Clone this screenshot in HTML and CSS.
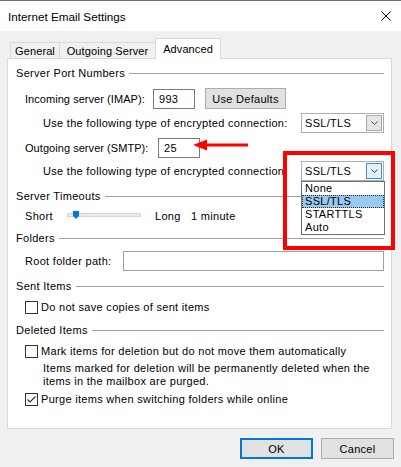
FILE: index.html
```html
<!DOCTYPE html>
<html>
<head>
<meta charset="utf-8">
<title>Internet Email Settings</title>
<link rel="stylesheet" href="styles.css">
</head>
<body>
<div class="window">
  <div class="titlebar">
    <span class="title">Internet Email Settings</span>
    <svg class="close" width="10" height="10" viewBox="0 0 10 10"><path d="M0.5 0.5L9.5 9.5M9.5 0.5L0.5 9.5" stroke="#000" stroke-width="1" fill="none"/></svg>
  </div>
  <div class="body">
    <div class="tabs">
      <div class="tab tab-general">General</div>
      <div class="tab tab-outgoing">Outgoing Server</div>
      <div class="tab tab-active">Advanced</div>
    </div>
    <div class="panel">
      <div class="group-head"><span>Server Port Numbers</span><i class="rule"></i></div>
      <div class="row row-imap">
        <span class="lbl-imap">Incoming server (IMAP):</span>
        <div class="textbox port">993</div>
        <div class="btn btn-defaults">Use Defaults</div>
      </div>
      <div class="row row-enc row-enc1">
        <span>Use the following type of encrypted connection:</span>
        <div class="select"><span>SSL/TLS</span><span class="drop"><svg width="7" height="4" viewBox="0 0 7 4"><path d="M0.5 0.5L3.5 3.5L6.5 0.5" stroke="#444" stroke-width="1" fill="none"/></svg></span></div>
      </div>
      <div class="row row-smtp">
        <span class="lbl-smtp">Outgoing server (SMTP):</span>
        <div class="textbox port port-smtp">25</div>
      </div>
      <div class="row row-enc row-enc2">
        <span>Use the following type of encrypted connection:</span>
        <div class="select"><span>SSL/TLS</span><span class="drop drop-focus"><svg width="7" height="4" viewBox="0 0 7 4"><path d="M0.5 0.5L3.5 3.5L6.5 0.5" stroke="#333" stroke-width="1" fill="none"/></svg></span>
          <div class="list">
            <div class="item">None</div>
            <div class="item item-sel">SSL/TLS</div>
            <div class="item">STARTTLS</div>
            <div class="item">Auto</div>
          </div>
        </div>
      </div>
      <div class="group-head gh-timeouts"><span>Server Timeouts</span><i class="rule"></i></div>
      <div class="row row-slider">
        <span class="lbl-short">Short</span>
        <div class="track"><svg class="thumb" width="6" height="8" viewBox="0 0 6 8"><polygon points="0,0 6,0 6,5 3,8 0,5" fill="#007ad9"/></svg></div>
        <span class="lbl-long">Long</span>
        <span>1 minute</span>
      </div>
      <div class="group-head gh-folders"><span>Folders</span><i class="rule"></i></div>
      <div class="row row-root">
        <span class="lbl-root">Root folder path:</span>
        <div class="textbox root"></div>
      </div>
      <div class="group-head gh-sent"><span>Sent Items</span><i class="rule"></i></div>
      <div class="row row-check row-nosave">
        <span class="cb"></span><span>Do not save copies of sent items</span>
      </div>
      <div class="group-head gh-deleted"><span>Deleted Items</span><i class="rule"></i></div>
      <div class="row row-check row-mark">
        <span class="cb"></span><span>Mark items for deletion but do not move them automatically</span>
      </div>
      <div class="note">Items marked for deletion will be permanently deleted when the<br>items in the mailbox are purged.</div>
      <div class="row row-check row-purge">
        <span class="cb"><svg width="11" height="11" viewBox="0 0 11 11"><polyline points="1.5,5.5 4,8 9.5,2.5" stroke="#333" stroke-width="1.2" fill="none"/></svg></span><span>Purge items when switching folders while online</span>
      </div>
    </div>
    <div class="buttons">
      <div class="btn btn-ok">OK</div>
      <div class="btn btn-cancel">Cancel</div>
    </div>
  </div>
  <div class="callout"></div>
  <svg class="arrow" width="60" height="20" viewBox="0 0 60 20"><line x1="15" y1="9" x2="58" y2="9" stroke="#ff0000" stroke-width="3"/><polygon points="3,9 17,3.5 17,14.5" fill="#ff0000"/></svg>
</div>
</body>
</html>
```

FILE: styles.css
```css
* { box-sizing: border-box; }
html, body { margin: 0; padding: 0; }
body {
  width: 401px;
  height: 467px;
  overflow: hidden;
  background: #f0f0f0;
  font-family: "Liberation Sans", Arial, sans-serif;
  font-size: 11px;
  letter-spacing: 0.3px;
  color: #000;
}
.window {
  position: relative;
  width: 401px;
  height: 467px;
  background: #f0f0f0;
}
.titlebar {
  height: 31px;
  border-top: 1px solid #707070;
  background: #fff;
  display: flex;
  align-items: center;
  justify-content: space-between;
  padding: 0 10px 0 8px;
}
.title { font-size: 11.7px; letter-spacing: 0; }
.close { display: block; }
.body { padding: 7px 7px 0 7px; }
.tabs {
  display: flex;
  align-items: flex-end;
  height: 20px;
  margin-left: 3px;
  position: relative;
  z-index: 1;
  letter-spacing: 0.1px;
}
.tab {
  height: 16px;
  border: 1px solid #d9d9d9;
  border-bottom: none;
  background: #f0f0f0;
  display: flex;
  align-items: center;
  justify-content: center;
}
.tab-general { width: 50px; }
.tab-outgoing { width: 95px; border-left: none; border-right: none; }
.tab-active {
  width: 66px;
  height: 21px;
  margin-bottom: -1px;
  background: #fff;
  padding-bottom: 1px;
}
.panel {
  width: 385px;
  height: 371px;
  background: #fff;
  border: 1px solid #d9d9d9;
  padding: 6px 7px 0 8px;
}
.group-head {
  display: flex;
  align-items: center;
  height: 16px;
}
.rule {
  flex: 1;
  height: 1px;
  background: #a0a0a0;
  margin-left: 4px;
}
.row {
  display: flex;
  align-items: center;
  margin-left: 9px;
}
.row-imap { height: 21px; margin-top: 7px; }
.lbl-imap { width: 128px; letter-spacing: 0.05px; }
.lbl-smtp { width: 133px; letter-spacing: 0.05px; }
.textbox {
  height: 20px;
  border: 1px solid #7a7a7a;
  background: #fff;
  display: flex;
  align-items: center;
  padding-left: 5px;
}
.port { width: 42px; }
.port-smtp { height: 20px; }
.btn {
  height: 21px;
  background: #e1e1e1;
  border: 1px solid #adadad;
  display: flex;
  align-items: center;
  justify-content: center;
}
.btn-defaults { width: 81px; margin-left: 10px; }
.row-enc { margin-left: 27px; height: 20px; }
.row-enc1 { margin-top: 4px; }
.row-smtp { height: 20px; margin-top: 5px; }
.row-enc2 { margin-top: 3px; }
.select {
  position: relative;
  margin-left: auto;
  width: 83px;
  height: 20px;
  border: 1px solid #adadad;
  background: #fff;
  display: flex;
  align-items: center;
  padding-left: 3px;
}
.drop {
  margin-left: auto;
  margin-right: 1px;
  width: 16px;
  height: 16px;
  background: #e5e5e5;
  border: 1px solid #acacac;
  display: flex;
  align-items: center;
  justify-content: center;
}
.drop-focus {
  background: #e5f1fb;
  border-color: #3d8ee0;
}
.list {
  position: absolute;
  top: 19px;
  left: -1px;
  width: 84px;
  height: 54px;
  background: #fff;
  border: 1px solid #707070;
  z-index: 2;
}
.item {
  height: 13px;
  line-height: 13px;
  padding-left: 3px;
}
.item-sel {
  background: #99c9ef;
  outline: 1px dotted #333;
  outline-offset: -1px;
}
.gh-timeouts { margin-top: 7px; }
.row-slider { height: 16px; margin-top: 4px; }
.lbl-short { width: 42px; }
.track {
  position: relative;
  width: 74px;
  height: 4px;
  background: #e7eaea;
  border: 1px solid #d6d6d6;
  margin-right: 14px;
  margin-bottom: 2px;
}
.thumb {
  position: absolute;
  left: 5px;
  top: -3px;
  display: block;
}
.lbl-long { width: 36px; }
.gh-folders { margin-top: 6px; }
.row-root { height: 20px; margin-top: 5px; }
.lbl-root { width: 98px; }
.root { width: 262px; border-color: #a0a0a0; }
.gh-sent { margin-top: 7px; }
.row-check { height: 16px; }
.row-nosave { margin-top: 5px; }
.gh-deleted { margin-top: 7px; }
.row-mark { margin-top: 5px; }
.cb {
  width: 13px;
  height: 13px;
  border: 1px solid #333;
  background: #fff;
  margin-right: 3px;
  display: flex;
  align-items: center;
  justify-content: center;
}
.note {
  margin: 3px 0 0 27px;
  line-height: 13px;
}
.row-purge { margin-top: 3px; }
.buttons {
  display: flex;
  justify-content: flex-end;
  gap: 8px;
  margin-top: 9px;
}
.btn-ok { width: 73px; border: 2px solid #0078d7; }
.btn-cancel { width: 73px; }
.callout {
  position: absolute;
  left: 283px;
  top: 151px;
  width: 112px;
  height: 99px;
  border: 4px solid #ff0000;
  z-index: 5;
}
.arrow {
  position: absolute;
  left: 190px;
  top: 136px;
  z-index: 5;
}
```
